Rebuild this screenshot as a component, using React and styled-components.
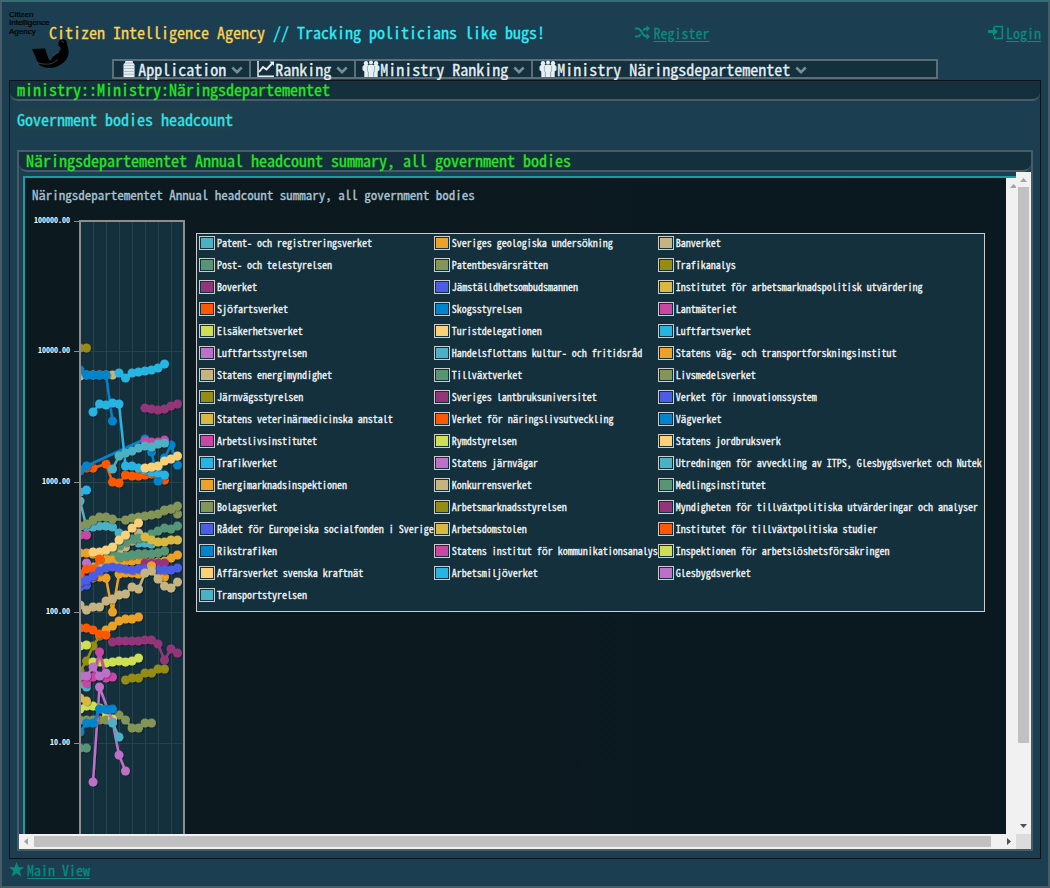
import React from 'react';
import styled, { createGlobalStyle } from 'styled-components';

const MONO = '"Noto Sans Mono CJK JP", "Liberation Mono", "Noto Sans CJK JP", monospace';

const GlobalStyle = createGlobalStyle`
  *, *::before, *::after { box-sizing: border-box; }
  body { margin: 0; background: #1b3e51; font-family: ${MONO}; -webkit-text-stroke: 0.3px currentColor; }
  h1, h2, h3, p, ul { margin: 0; padding: 0; font-weight: 500; }
  ul { list-style: none; }
`;

const Shell = styled.div`
  display: flex;
  flex-direction: column;
  height: 100vh;
  min-height: 700px;
  padding: 0 7px;
  border: 2px solid #485c66;
  border-top-color: #336f75;
  background: #1b3e51;
  overflow: hidden;
`;

const Header = styled.header`
  display: grid;
  grid-template-columns: 20fr 13fr;
  flex: none;
  height: 57px;
`;

const Brand = styled.div`
  display: flex;
  padding-top: 7px;
`;

const Logo = styled.svg`
  flex: none;
  width: 40px;
  height: 50px;
  overflow: visible;
  -webkit-text-stroke: 0;
`;

const Title = styled.h1`
  padding-top: 12px;
  font-size: 16px;
  line-height: 22px;
  white-space: pre;
  color: #ffd24d;
`;

const Tagline = styled.span`
  color: #2df0fa;
`;

const Account = styled.div`
  display: flex;
  justify-content: space-between;
  align-items: flex-start;
  padding: 21px 0 0 1px;
`;

const IconLink = styled.a`
  display: inline-flex;
  align-items: center;
  gap: 3px;
  font-size: 14px;
  line-height: 20px;
  color: #0a8a80;
  text-decoration: none;
  span { text-decoration: underline; text-underline-offset: 2px; }
  svg { display: block; width: 15px; height: 15px; margin-bottom: 2px; }
`;

const Menu = styled.nav`
  display: flex;
  flex: none;
  width: 80%;
  height: 20px;
  margin: 0 auto 1px;
  border: 2px solid #5c6f78;
  background: #14303d;
`;

const MenuButton = styled.button`
  display: flex;
  align-items: center;
  height: 16px;
  padding: 0 6px 0 8px;
  border: 0;
  border-right: ${(p) => (p.$last ? '0' : '2px solid #5c6f78')};
  background: none;
  color: #e6eff3;
  font: 500 16px/16px ${MONO};
  white-space: nowrap;
  svg { flex: none; display: block; }
  svg:last-child { margin: 2px 0 0 5px; }
`;

const Panel = styled.main`
  display: flex;
  flex-direction: column;
  flex: 1;
  min-height: 0;
  border: 1px solid #0b1519;
`;

const Caption = styled.h2`
  flex: none;
  height: 20px;
  padding: 0 7px;
  border-bottom: 2px solid #475c66;
  border-radius: 0 0 8px 8px;
  background: #14303d;
  color: #26e81e;
  font-size: 16px;
  line-height: 16px;
  white-space: nowrap;
`;

const PanelBody = styled.div`
  display: flex;
  flex-direction: column;
  flex: 1;
  min-height: 0;
  padding: 7px;
`;

const SectionTitle = styled.h2`
  align-self: flex-start;
  margin-bottom: 20px;
  border-radius: 6px;
  background: #22404a;
  color: #2de6ee;
  font-size: 16px;
  line-height: 22px;
`;

const InnerPanel = styled.section`
  display: flex;
  flex-direction: column;
  flex: 1;
  min-height: 0;
  border: 2px solid #475c66;
`;

const Scroller = styled.div`
  display: grid;
  grid-template-columns: minmax(0, 1fr) 15px;
  grid-template-rows: minmax(0, 1fr) 15px;
  flex: 1;
  min-height: 0;
`;

const Viewport = styled.div`
  display: flex;
  min-width: 0;
  overflow: hidden;
  padding: 4px 0 0 4px;
`;

const ChartFrame = styled.div`
  display: flex;
  flex: 1;
  min-width: 0;
  border: 2px solid #1c9aa0;
  border-width: 2px 0 0 2px;
`;

const Chart = styled.div`
  flex: 1;
  min-width: 0;
  overflow: hidden;
  background: linear-gradient(90deg, #0c1a20, #0a191f);
`;

const ChartTitle = styled.h3`
  height: 32px;
  padding: 7px 7px 0;
  color: #aac3d2;
  font-size: 13px;
  line-height: 20px;
  white-space: nowrap;
`;

const ChartRow = styled.div`
  display: flex;
  align-items: flex-start;
`;

const Plot = styled.svg`
  flex: none;
  display: block;
  width: 165px;
  height: 640px;
`;

const AxisLabel = styled.text`
  font: 700 8px ${MONO};
  fill: #f4f4f4;
  text-anchor: end;
  -webkit-text-stroke: 0;
`;

const Legend = styled.ul`
  display: grid;
  grid-template-columns: repeat(3, auto);
  gap: 4px 0;
  margin: 23px 0 0 6px;
  padding: 0 2px 7px;
  border: 1px solid #cccccc;
  background: #14303d;
`;

const LegendItem = styled.li`
  display: flex;
  align-items: center;
  gap: 2px;
  height: 18px;
  color: #f2f5f6;
  font-size: 10px;
  line-height: 18px;
  white-space: nowrap;
`;

const Swatch = styled.span`
  width: 16px;
  height: 14px;
  padding: 1px;
  border: 1px solid #cccccc;
  background: ${(p) => p.$color} content-box;
`;

const Scrollbar = styled.div`
  display: flex;
  flex-direction: ${(p) => (p.$vertical ? 'column' : 'row')};
  flex: none;
  background: #f1f1f1;
`;

const InnerScrollbar = styled.div`
  flex: none;
  width: 10px;
  overflow: hidden;
  background: #f1f1f1;
`;

const ScrollTrack = styled.div`
  flex: 1;
  min-width: 0;
  min-height: 0;
  padding: ${(p) => (p.$vertical ? '0 2px' : '2px 0')};
`;

const Thumb = styled.div`
  width: ${(p) => (p.$vertical ? '100%' : '99%')};
  height: ${(p) => (p.$vertical ? '88%' : '100%')};
  background: #c1c1c1;
`;

const ArrowSvg = styled.svg`
  flex: none;
  display: block;
  width: 15px;
  height: 15px;
`;

const Corner = styled.div`
  background: #dcdcdc;
`;

const Footer = styled.footer`
  display: flex;
  flex: none;
  height: 27px;
  padding-top: 1px;
  align-items: flex-start;
`;

const ARROWS = {
  up: 'M4 10h7L7.500 6z',
  down: 'M4 5h7L7.500 9z',
  left: 'M9 4v7L5 7.500z',
  right: 'M6 4v7L10 7.500z',
};

function Arrow({ dir, dim }) {
  return (
    <ArrowSvg viewBox="0 0 15 15" aria-hidden="true">
      <path d={ARROWS[dir]} fill={dim ? '#a3a3a3' : '#505050'} />
    </ArrowSvg>
  );
}

function ServerIcon() {
  return (
    <svg width="16" height="18" viewBox="0 0 16 18" aria-hidden="true">
      <path fill="#e6eff3" d="M4 1h6q1 0 1 1v1q1.500 .5 1.500 2v12H1.500V5Q1.500 3.500 3 3V2q0-1 1-1z" />
      <path fill="none" stroke="#8fa4ae" strokeWidth=".7" d="M3 3h8M1.500 5.600h11M1.500 8.500h11M1.500 11.400h11M1.500 14.300h11" />
    </svg>
  );
}

function ChartIcon() {
  return (
    <svg width="16" height="18" viewBox="0 0 16 18" overflow="visible" aria-hidden="true">
      <path fill="none" stroke="#e6eff3" strokeWidth="1.500" d="M-1 1v15.300h16" />
      <path fill="none" stroke="#e6eff3" strokeWidth="2" d="M0 12l4-5 3.500 2.500L13.500 3" />
      <path fill="#e6eff3" d="M10.500 1.500H15V6z" />
    </svg>
  );
}

function GroupIcon() {
  return (
    <svg width="16" height="18" viewBox="0 0 16 18" overflow="visible" aria-hidden="true">
      <g fill="#e6eff3">
        <circle cx="2" cy="3.200" r="2.200" />
        <circle cx="12" cy="3.200" r="2.200" />
        <circle cx="7" cy="2.600" r="2" />
        <path d="M0 5h4.200v12H.3v-5.500L-1.500 10V6.500zM9.800 5H14l1.500 1.500V10l-1.800 1.500V17H9.800z" />
        <path d="M4.800 4.800h4.400L10.500 6.500v4.500l-.7 1v5H4.200v-5l-.7-1V6.500z" />
      </g>
      <path fill="none" stroke="#7f96a1" strokeWidth=".7" d="M3.400 6v5l.9 1.200V17M10.600 6v5l-.9 1.200V17" />
    </svg>
  );
}

function Chevron() {
  return (
    <svg width="12" height="10" viewBox="0 0 12 10" aria-hidden="true">
      <path fill="none" stroke="#788d98" strokeWidth="2.600" d="M1.300 2.500L6 7.100 10.700 2.500" />
    </svg>
  );
}

function ShuffleIcon() {
  return (
    <svg viewBox="0 0 15 15" aria-hidden="true">
      <path fill="none" stroke="currentColor" strokeWidth="2" d="M0 3.500h2.500c4.500 0 4.500 8 9 8H13M0 11.500h2.500c1.500 0 2.400-1 3-2.300M8 5.500c.8-1.200 1.800-2 3.500-2H13" />
      <path fill="currentColor" d="M11.500 0L15 3.500 11.500 7zM11.500 8l3.500 3.500-3.500 3.500z" />
    </svg>
  );
}

function SignInIcon() {
  return (
    <svg viewBox="0 0 15 15" aria-hidden="true">
      <path fill="currentColor" d="M0 5h5V2l5 4.500-5 4.500V8H0z" />
      <path fill="none" stroke="currentColor" strokeWidth="1.400" d="M6.500 3V1.500h7.800v12H6.500V11" />
    </svg>
  );
}

function StarIcon() {
  return (
    <svg viewBox="0 0 15 15" aria-hidden="true">
      <path fill="currentColor" d="M7.500 0l2 5.200H15l-4.300 3.500L12.300 14.500 7.500 11.200l-4.800 3.300 1.600-5.800L0 5.200h5.500z" />
    </svg>
  );
}

function AgencyLogo() {
  return (
    <Logo viewBox="0 0 40 50" role="img" aria-label="Citizen Intelligence Agency">
      <g fill="#000" stroke="#000" strokeWidth=".2" fontFamily='"Liberation Sans", sans-serif' fontSize="8">
        <text x="0" y="8">Citizen</text>
        <text x="0" y="16">Intelligence</text>
        <text x="0" y="25">Agency</text>
      </g>
      <path d="M23 40l13-.5 4 11.500c1.500 1.500 2.500-1 4-3.500 1-2 3.500-3 6-4.500 1-1 2-3 1.500-4.500l-1.500-1c-1-1.500-.8-4 .5-6 1.500-2 6-1.500 7 .5.5 1.500 0 3 .8 4.500 1 3 2 7 .7 10.500-1 4-4.500 7-8 9-5 3.500-13 4-19 1-3-2-3.500-4.500-5-8z" />
      <path fill="none" stroke="#6d7478" strokeWidth=".5" d="M28 53.500c5 2 11 2 15 1l6-4M52 32l3 1.500M44 47l6-4" />
    </Logo>
  );
}

const MENU = [
  ['Application', ServerIcon],
  ['Ranking', ChartIcon],
  ['Ministry Ranking', GroupIcon],
  ['Ministry Näringsdepartementet', GroupIcon],
];

const C = {
  teal: '#4bb2c5', orange: '#eaa228', tan: '#c5b47f', green: '#579575', moss: '#839557',
  olive: '#958c12', plum: '#953579', indigo: '#4b5de4', gold: '#d8b83f', red: '#ff5800',
  blue: '#0085cc', pink: '#c747a3', lime: '#cddf54', sand: '#fbd178', sky: '#26b4e3', violet: '#bd70c7',
};

const PALETTE = Object.values(C);

const BODIES = [
  'Patent- och registreringsverket', 'Sveriges geologiska undersökning', 'Banverket',
  'Post- och telestyrelsen', 'Patentbesvärsrätten', 'Trafikanalys',
  'Boverket', 'Jämställdhetsombudsmannen', 'Institutet för arbetsmarknadspolitisk utvärdering',
  'Sjöfartsverket', 'Skogsstyrelsen', 'Lantmäteriet',
  'Elsäkerhetsverket', 'Turistdelegationen', 'Luftfartsverket',
  'Luftfartsstyrelsen', 'Handelsflottans kultur- och fritidsråd', 'Statens väg- och transportforskningsinstitut',
  'Statens energimyndighet', 'Tillväxtverket', 'Livsmedelsverket',
  'Järnvägsstyrelsen', 'Sveriges lantbruksuniversitet', 'Verket för innovationssystem',
  'Statens veterinärmedicinska anstalt', 'Verket för näringslivsutveckling', 'Vägverket',
  'Arbetslivsinstitutet', 'Rymdstyrelsen', 'Statens jordbruksverk',
  'Trafikverket', 'Statens järnvägar', 'Utredningen för avveckling av ITPS, Glesbygdsverket och Nutek',
  'Energimarknadsinspektionen', 'Konkurrensverket', 'Medlingsinstitutet',
  'Bolagsverket', 'Arbetsmarknadsstyrelsen', 'Myndigheten för tillväxtpolitiska utvärderingar och analyser',
  'Rådet för Europeiska socialfonden i Sverige', 'Arbetsdomstolen', 'Institutet för tillväxtpolitiska studier',
  'Rikstrafiken', 'Statens institut för kommunikationsanalys', 'Inspektionen för arbetslöshetsförsäkringen',
  'Affärsverket svenska kraftnät', 'Arbetsmiljöverket', 'Glesbygdsverket',
  'Transportstyrelsen',
];

const LEGEND_COLORS = BODIES.map((_, i) => PALETTE[i % PALETTE.length]);

// [colour, first year index, plotted heights]; null marks a year without a figure.
const SERIES = [
  [C.olive, 0, [348, 348]],
  [C.tan, 0, [376, 375, 375, 375, 375, 375]],
  [C.blue, 0, [370, 375, 375, 375, 375, 421]],
  [C.sky, 6, [373, 378, 373, 372, 371, 370, 368, 364]],
  [C.plum, 10, [408, 409, 410, 409, 406, 404]],
  [C.red, 0, [470, 468, 468, null, 464, 482, 483, 475, 476, 476, 475, 474, 475, 480]],
  [C.blue, 0, [471, 466, null, null, null, null, null, null, null, null, 439, 452, 481, 458, 445, 465]],
  [C.sky, 2, [412, 404, 405, 403, 404, 466, 466, 468, 470, 472, 473, 475]],
  [C.pink, 10, [441, 442, 442, 440]],
  [C.teal, 5, [469, 456, 453, 451, 448, 446, 447, 444, 443]],
  [C.sand, 10, [468, 467, 466, 461, 459, 456]],
  [C.sky, 0, [492, 490]],
  [C.teal, 0, [501, 527, 527, 526, 526, 527, 533, 538, 541, 543, 543, 544]],
  [C.moss, 13, [511, 509, 514]],
  [C.moss, 0, [526, 524, 520, 517, 517, 519, null, 520, 518, 517, 516, 515, 514, 510, 509, 506]],
  [C.pink, 0, [535, 535]],
  [C.tan, 2, [567, 564, 561, 561, 553, 547, 541, 533]],
  [C.green, 3, [558, 554, 550, 545, 542, 539, 538, 537, 534, 531, 528, 529, 526]],
  [C.green, 4, [556, 554, 557, 556, 555, 554, 554, 554, 553, 551]],
  [C.gold, 10, [537, 540, 542, 542, 540, 540]],
  [C.orange, 0, [553, 553, 554, 557, 559, 560, 561, 561, 561, 560, 562, 562, 562, 561, 558, 555]],
  [C.green, 6, [557, 556, 555, 554, 554, 554, 553, 551]],
  [C.sand, 2, [552, 552, 550, 547, 540, 535, 528, 523]],
  [C.violet, 0, [575, 563]],
  [C.red, 0, [574, 569, 569, 559]],
  [C.plum, 10, [563, 563, 563, 563]],
  [C.orange, 2, [578, 577, 578, 612, 574, 573, 573, 574, 572, 566, 572, 577]],
  [C.indigo, 0, [587, 585, 577]],
  [C.indigo, 0, [582, 580, 576, 571, 568, 567, 568, 569, 570, 569, 569, 569, 570, 570, 570, 568]],
  [C.orange, 11, [566]],
  [C.tan, 0, [605, 610, 607, 607, 601, 599, 595, 594, 587, 589, 573, 571, 579, 586, 588, 582]],
  [C.olive, 0, [671, 661, 646, 636]],
  [C.orange, 4, [630, 626, 621, 619, 619, 617]],
  [C.red, 0, [628, 628, 630, 634, 635]],
  [C.lime, 0, [646, 645]],
  [C.lime, 2, [662, 662, 663, 662, 661, 662, 661, 658]],
  [C.plum, 5, [642, 641, 641, 641, 641, 640, 640, 644, 660, 649, 653]],
  [C.olive, 7, [680, 678, 678, 673, 673, 669, 669]],
  [C.teal, 0, [684, 687]],
  [C.pink, 0, [677, 683, 677, 652, 678, 677]],
  [C.violet, 0, [676, 676, 667, 676, 673]],
  [C.lime, 0, [709, 706, 706, 708, 718, 720]],
  [C.gold, 0, [698, 701]],
  [C.moss, 0, [720, 720, 720, 720, 720, 719, 715, 720, 728, 728, 723, 723]],
  [C.lime, 5, [719]],
  [C.violet, 2, [782, 687, null, 722, 755, 771]],
  [C.blue, 0, [732, 723, 723, 709, 709, 709]],
  [C.teal, 5, [723, 737]],
  [C.green, 0, [748, 748]],
];

const TICKS = [[221, '100000.00'], [351, '10000.00'], [482, '1000.00'], [612, '100.00'], [743, '10.00']];
const YEARS = [93, 106, 119, 132, 145, 158, 171];

function Line({ color, start, values }) {
  const points = values
    .map((y, i) => (y === null ? null : [80 + (start + i) * 6.5, y]))
    .filter(Boolean);
  return (
    <g>
      <polyline points={points.map((p) => p.join(',')).join(' ')} fill="none" stroke={color} strokeWidth="2.500" strokeLinejoin="round" />
      {points.map(([x, y]) => <circle key={x} cx={x} cy={y} r="4.500" fill={color} />)}
    </g>
  );
}

function HeadcountPlot() {
  return (
    <Plot viewBox="25 210 165 640" role="img" aria-label="Headcount per year, logarithmic scale">
      <defs>
        <clipPath id="plot-area"><rect x="80" y="221" width="104" height="640" /></clipPath>
        <filter id="line-shadow" x="-10%" y="-10%" width="120%" height="120%">
          <feDropShadow dx="1" dy="1" stdDeviation="0.6" floodColor="#000" floodOpacity=".3" />
        </filter>
      </defs>
      <rect x="80" y="221" width="104" height="660" fill="#14303d" />
      {YEARS.map((x) => <path key={x} d={`M${x + 0.5} 222V880`} stroke="#25434b" />)}
      {TICKS.map(([y, label]) => (
        <g key={label}>
          <path d={`M80 ${y + 0.5}H184`} stroke="#25434b" />
          <path d={`M74 ${y + 0.5}H79`} stroke="#8b8b8b" />
          <AxisLabel x="70" y={y + 2}>{label}</AxisLabel>
        </g>
      ))}
      <rect x="80" y="221" width="104" height="660" fill="none" stroke="#8b8d8f" strokeWidth="2" />
      <g clipPath="url(#plot-area)">
        {SERIES.map(([color, start, values], i) => (
          <g key={i} filter="url(#line-shadow)">
            <Line color={color} start={start} values={values} />
          </g>
        ))}
      </g>
      <path d="M80 220V860" stroke="#8b8d8f" strokeWidth="2" />
    </Plot>
  );
}

export default function App() {
  return (
    <>
      <GlobalStyle />
      <Shell>
        <Header>
          <Brand>
            <AgencyLogo />
            <Title>Citizen Intelligence Agency <Tagline>// Tracking politicians like bugs!</Tagline></Title>
          </Brand>
          <Account>
            <IconLink href="#register"><ShuffleIcon /><span>Register</span></IconLink>
            <IconLink href="#login"><SignInIcon /><span>Login</span></IconLink>
          </Account>
        </Header>
        <Menu>
          {MENU.map(([label, Icon], i) => (
            <MenuButton key={label} type="button" $last={i === MENU.length - 1}>
              <Icon />{label}<Chevron />
            </MenuButton>
          ))}
        </Menu>
        <Panel>
          <Caption>ministry::Ministry:Näringsdepartementet</Caption>
          <PanelBody>
            <SectionTitle>Government bodies headcount</SectionTitle>
            <InnerPanel>
              <Caption>Näringsdepartementet Annual headcount summary, all government bodies</Caption>
              <Scroller>
                <Viewport>
                  <ChartFrame>
                    <Chart>
                      <ChartTitle>Näringsdepartementet Annual headcount summary, all government bodies</ChartTitle>
                      <ChartRow>
                        <HeadcountPlot />
                        <Legend>
                          {BODIES.map((name, i) => (
                            <LegendItem key={name}><Swatch $color={LEGEND_COLORS[i]} />{name}</LegendItem>
                          ))}
                        </Legend>
                      </ChartRow>
                    </Chart>
                    <InnerScrollbar><Arrow dir="up" dim /></InnerScrollbar>
                  </ChartFrame>
                </Viewport>
                <Scrollbar $vertical>
                  <Arrow dir="up" dim />
                  <ScrollTrack $vertical><Thumb $vertical /></ScrollTrack>
                  <Arrow dir="down" />
                </Scrollbar>
                <Scrollbar>
                  <Arrow dir="left" dim />
                  <ScrollTrack><Thumb /></ScrollTrack>
                  <Arrow dir="right" />
                </Scrollbar>
                <Corner />
              </Scroller>
            </InnerPanel>
          </PanelBody>
        </Panel>
        <Footer>
          <IconLink href="#main"><StarIcon /><span>Main View</span></IconLink>
        </Footer>
      </Shell>
    </>
  );
}
